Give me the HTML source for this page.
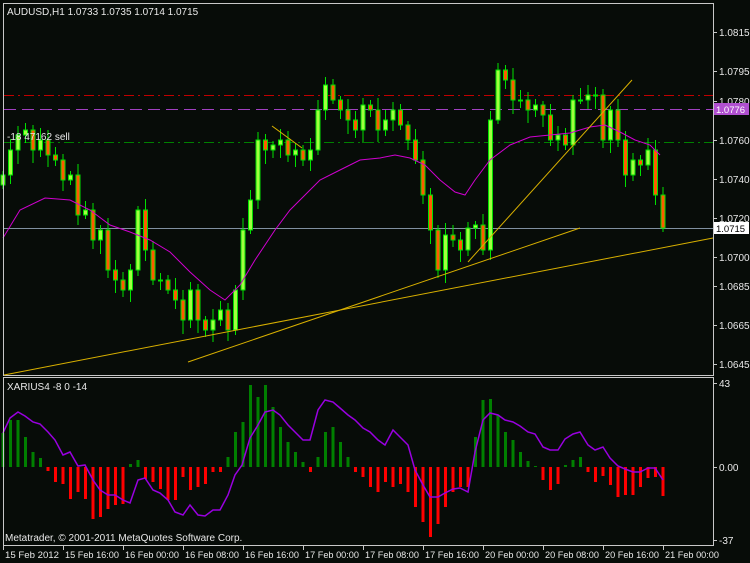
<!DOCTYPE html>
<html><head><meta charset="utf-8"><style>
html,body{margin:0;padding:0;background:#000;}
svg{display:block;font-family:"Liberation Sans",sans-serif;}
</style></head><body>
<svg id="s" width="750" height="563" xmlns="http://www.w3.org/2000/svg">
<rect width="750" height="563" fill="#070c08"/>
<line x1="4" y1="95.5" x2="713" y2="95.5" stroke="#c00000" stroke-dasharray="10,4,2,4"/>
<line x1="4" y1="109.5" x2="713" y2="109.5" stroke="#a040c0" stroke-dasharray="12,6"/>
<line x1="4" y1="142.5" x2="713" y2="142.5" stroke="#008000" stroke-dasharray="10,4,2,4"/>
<line x1="4" y1="228.5" x2="713" y2="228.5" stroke="#8090a0"/>
<g id="g"></g>
<g fill="none" stroke="#c8c8c8" stroke-width="1">
<rect x="3.5" y="3.5" width="710" height="372"/>
<rect x="3.5" y="377.5" width="710" height="168"/>
</g>
<g stroke="#d8b000" stroke-width="1">
<line x1="4" y1="375" x2="713" y2="238"/>
<line x1="188" y1="362" x2="580" y2="228"/>
<line x1="468" y1="262" x2="632" y2="80"/>
<line x1="272" y1="126" x2="302" y2="148"/>
</g>
<g fill="#e8e8e8" font-size="10">
<text x="7" y="15">AUDUSD,H1  1.0733 1.0735 1.0714 1.0715</text>
<text x="7" y="140">-18  47162 sell</text>
<text x="7" y="390">XARIUS4 -8 0 -14</text>
<text x="5" y="541">Metatrader, © 2001-2011 MetaQuotes Software Corp.</text>
</g>
<g fill="#e8e8e8" font-size="10" id="ax"></g>
<rect x="714" y="103" width="35" height="12" fill="#b050d0"/>
<text x="716" y="113" font-size="9.5" fill="#fff">1.0776</text>
<rect x="714" y="222" width="35" height="12" fill="#fff"/>
<text x="716" y="232" font-size="9.5" fill="#000">1.0715</text>
</svg>
<script>
(function(){
var NS="http://www.w3.org/2000/svg",g=document.getElementById('g'),ax=document.getElementById('ax');
function el(t,a,p){var e=document.createElementNS(NS,t);for(var k in a)e.setAttribute(k,a[k]);(p||g).appendChild(e);return e;}
var c=[175,150,135,130,150,140,155,160,180,175,215,210,240,230,270,280,290,270,210,250,280,280,290,300,320,290,320,330,320,310,330,290,230,200,140,150,145,140,155,150,160,150,110,85,100,110,120,130,105,110,130,120,110,125,140,160,195,230,270,235,240,250,228,225,250,120,70,80,100,100,110,105,115,140,135,145,100,100,95,95,140,110,140,175,160,165,150,195,228];
for(var i=0;i<c.length;i++){var x=3+7.5*i,o=i?c[i-1]:185,cl=c[i];var tp=Math.min(o,cl),bt=Math.max(o,cl);
var hw=4+((i*7)%9),lw=4+((i*5)%11);
el('line',{x1:x,y1:tp-hw,x2:x,y2:bt+lw,stroke:'#00e000'});
el('rect',{x:x-2,y:tp,width:4,height:Math.max(bt-tp,1),fill:cl<o?'#a0ff40':'#ff5a00',stroke:'#00e000','stroke-width':1});}
el('polyline',{points:"3,238 20,210 45,198 70,200 90,210 110,225 130,232 150,240 170,252 190,272 210,290 225,300 240,285 255,260 275,230 290,210 305,195 320,180 340,170 360,160 380,158 395,155 410,158 425,165 440,180 455,192 465,195 475,180 490,160 510,145 530,137 550,135 570,133 590,127 605,125 620,132 635,140 650,145 660,155",fill:'none',stroke:'#d000d0'});
var h=[34,47,47,30,15,9,-4,-15,-17,-32,-25,-32,-52,-50,-42,-38,-37,3,7,-12,-15,-22,-33,-33,-10,-23,-20,-17,-5,-5,10,35,45,82,70,82,60,40,25,15,5,-5,10,35,40,25,10,-5,-10,-20,-25,-15,-20,-17,-25,-40,-55,-70,-57,-40,-25,-20,-20,30,67,68,52,35,27,15,6,1,-13,-23,-17,2,7,10,-5,-15,-9,-18,-30,-28,-28,-20,-11,-10,-29];
for(var i=0;i<h.length;i++){var x=3+7.5*i,v=h[i];el('rect',{x:x-1.5,y:v>0?467-v:467,width:3,height:Math.abs(v),fill:v>0?'#008000':'#ff0000'});}
el('polyline',{points:"3,433 10,418 18,412 25,416 33,422 40,424 48,432 55,440 63,455 70,452 78,466 85,465 93,480 100,490 108,495 115,495 123,500 130,503 138,480 145,478 153,490 160,493 168,500 175,512 183,515 190,505 198,515 205,516 213,510 220,510 228,495 235,475 242,465 250,438 258,425 265,412 273,410 280,415 288,425 295,432 303,440 310,440 318,410 325,400 333,402 340,408 348,415 355,420 363,428 370,432 378,440 385,445 393,430 400,437 408,445 415,470 423,485 430,497 438,497 445,493 453,489 460,488 468,492 475,452 483,420 490,413 498,415 505,420 513,422 520,426 528,432 535,434 543,447 550,450 558,450 565,439 573,434 580,432 588,445 595,450 603,447 610,458 618,466 625,469 633,472 640,472 648,468 655,468 663,480",fill:'none',stroke:'#9900e0','stroke-width':1.5});
var pl=[["1.0815",32],["1.0795",71],["1.0780",101],["1.0760",140],["1.0740",179],["1.0720",218],["1.0700",257],["1.0685",286],["1.0665",325],["1.0645",364],["43",383],["0.00",467],["-37",540]];
pl.forEach(function(p){el('line',{x1:713,y1:p[1]+.5,x2:717,y2:p[1]+.5,stroke:'#c8c8c8'},ax);var t=el('text',{x:719,y:p[1]+4},ax);t.textContent=p[0];});
var tl=["15 Feb 2012","15 Feb 16:00","16 Feb 00:00","16 Feb 08:00","16 Feb 16:00","17 Feb 00:00","17 Feb 08:00","17 Feb 16:00","20 Feb 00:00","20 Feb 08:00","20 Feb 16:00","21 Feb 00:00"];
tl.forEach(function(s,i){var x=3+60*i;el('line',{x1:x+.5,y1:546,x2:x+.5,y2:550,stroke:'#c8c8c8'},ax);var t=el('text',{x:x+2,y:558,'font-size':'9.5',textLength:'54',lengthAdjust:'spacingAndGlyphs'},ax);t.textContent=s;});
})();
</script>
</body></html>
